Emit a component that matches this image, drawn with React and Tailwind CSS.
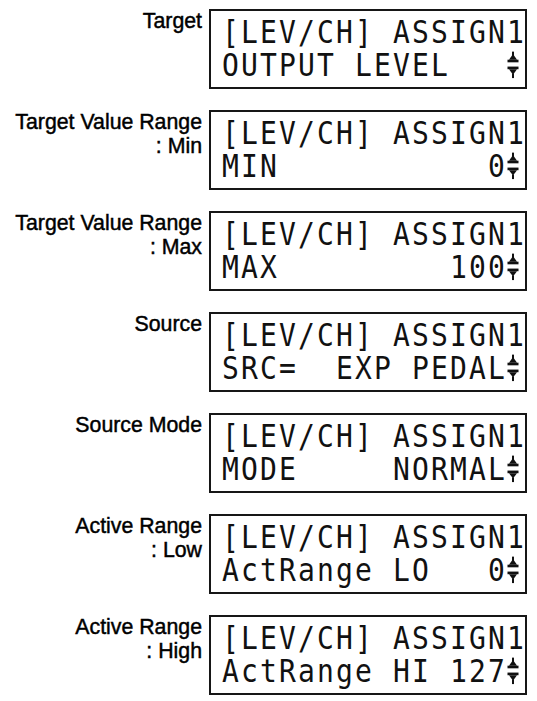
const screens = [
  { label: ["Target"], line: "OUTPUT LEVEL   " },
  { label: ["Target Value Range", ": Min"], line: "MIN           0" },
  { label: ["Target Value Range", ": Max"], line: "MAX         100" },
  { label: ["Source"], line: "SRC=  EXP PEDAL" },
  { label: ["Source Mode"], line: "MODE     NORMAL" },
  { label: ["Active Range", ": Low"], line: "ActRange LO   0" },
  { label: ["Active Range", ": High"], line: "ActRange HI 127" },
];

// up/down value arrow shown in the last cell of the LCD
function IncDec() {
  return (
    <span className="inline-block w-[19px] h-[28px] align-top">
      <svg width="19" height="28" viewBox="0 0 19 28" fill="#111">
        <rect x="5" y="1.5" width="2" height="4" />
        <polygon points="2,8.5 10,8.5 6,3.5" />
        <rect x="0.5" y="8.5" width="11" height="2.3" />
        <rect x="0.5" y="14.5" width="11" height="2.3" />
        <polygon points="2,16.8 10,16.8 6,21.5" />
        <rect x="5" y="20.5" width="2" height="4" />
      </svg>
    </span>
  );
}

function Lcd({ line }) {
  return (
    <div className="w-[318px] h-[80px] border-2 border-[#161616] pt-[7.5px] pl-[11px] flex flex-col gap-[5px] font-['DejaVu_Sans_Mono',monospace] text-[28px] leading-[28px] tracking-[2.14px] text-[#111] whitespace-pre">
      <div className="h-[28px] scale-y-[1.15]">[LEV/CH] ASSIGN1</div>
      <div className="h-[28px] scale-y-[1.15]">
        {line}
        <IncDec />
      </div>
    </div>
  );
}

export default function App() {
  return (
    <div className="w-[537px] h-[701px] bg-white pt-[9px] flex flex-col gap-[21px] font-['Liberation_Sans',Arial,sans-serif]">
      {screens.map((s, i) => (
        <div key={i} className="flex items-start">
          <div className="w-[202px] text-right text-[21.3px] leading-[24px] text-black [-webkit-text-stroke:0.45px_#000]">
            {s.label.map((t) => (
              <div key={t}>{t}</div>
            ))}
          </div>
          <div className="ml-[7px]">
            <Lcd line={s.line} />
          </div>
        </div>
      ))}
    </div>
  );
}
